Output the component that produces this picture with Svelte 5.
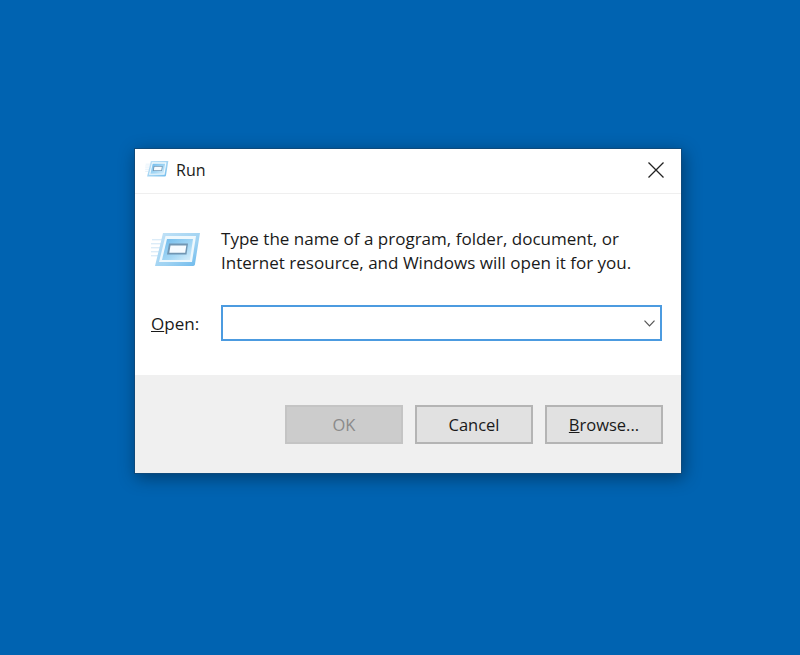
<script>
  const buttons = [
    { id: 'ok', key: '', after: 'OK', disabled: true },
    { id: 'cancel', key: '', after: 'Cancel', disabled: false },
    { id: 'browse', key: 'B', after: 'rowse...', disabled: false }
  ];
</script>

{#snippet runIcon(cls)}
  <svg class={cls} viewBox="0 0 50 36" aria-hidden="true">
    <defs>
      <linearGradient id={cls + '-outer'} x1="0" y1="0" x2="1" y2="1">
        <stop offset="0" stop-color="#c4e3f7" />
        <stop offset="0.6" stop-color="#9ed2f2" />
        <stop offset="1" stop-color="#6ab8ec" />
      </linearGradient>
      <linearGradient id={cls + '-inner'} x1="0" y1="0" x2="1" y2="1">
        <stop offset="0" stop-color="#6dbaec" />
        <stop offset="0.6" stop-color="#a6d8f5" />
        <stop offset="1" stop-color="#dcf0fb" />
      </linearGradient>
    </defs>
    <g fill="#dcecf8">
      <rect x="1" y="8" width="11" height="1.400" />
      <rect x="0" y="12" width="10" height="1.400" />
      <rect x="0" y="16" width="9" height="1.400" />
      <rect x="0" y="20" width="8" height="1.400" />
      <rect x="0" y="24" width="7" height="1.400" />
    </g>
    <path d="M12 2 H49 L44 33 Q44 35 41 35 H4 Z" fill={`url(#${cls}-outer)`} />
    <path d="M14.500 5 H45 L41 31 H8 Z" fill="#eef8fd" />
    <path d="M16 8 H42 L39 29 H11 Z" fill={`url(#${cls}-inner)`} />
    <path d="M18 12.500 H37 L35.500 23.500 H16 Z" fill="#7196b3" />
    <path d="M19.500 14.500 H35.300 L34.200 21.800 H18.300 Z" fill="#f6fbff" />
  </svg>
{/snippet}

<main class="desktop">
  <section class="dialog">
    <header class="titlebar">
      {@render runIcon('small-icon')}
      <span class="title">Run</span>
      <svg class="close" viewBox="0 0 16 16" aria-hidden="true">
        <path d="M0.500 0.500 L15.500 15.500 M15.500 0.500 L0.500 15.500" />
      </svg>
    </header>

    <div class="content">
      <div class="intro">
        {@render runIcon('big-icon')}
        <p>Type the name of a program, folder, document, or<br />Internet resource, and Windows will open it for you.</p>
      </div>
      <div class="open-row">
        <span class="label"><u>O</u>pen:</span>
        <div class="combo">
          <svg class="chevron" viewBox="0 0 11 7" aria-hidden="true">
            <path d="M0.500 0.700 L5.500 6 L10.500 0.700" />
          </svg>
        </div>
      </div>
    </div>

    <footer class="footer">
      {#each buttons as b (b.id)}
        <button class="btn" class:disabled={b.disabled} disabled={b.disabled}>{#if b.key}<u>{b.key}</u>{/if}{b.after}</button>
      {/each}
    </footer>
  </section>
</main>

<style>
  :global(body) {
    margin: 0;
    background: #0063b1;
  }
  .desktop {
    box-sizing: border-box;
    height: 655px;
    padding: 148px 0 0 134px;
    background: #0063b1;
    font-family: "Open Sans", "Noto Sans", sans-serif;
    color: #1a1a1a;
    overflow: hidden;
  }
  .dialog {
    box-sizing: border-box;
    width: 548px;
    height: 326px;
    background: #fff;
    border: 1px solid #0e4a7c;
    box-shadow: 2px 4px 16px rgba(0, 0, 0, 0.38);
    display: flex;
    flex-direction: column;
  }
  .titlebar {
    box-sizing: border-box;
    height: 45px;
    flex: none;
    display: flex;
    align-items: center;
    padding: 0 17px 2px 10px;
    border-bottom: 1px solid #efefef;
  }
  .small-icon {
    width: 24px;
    height: 17px;
    margin-top: -4px;
    filter: blur(0.3px);
  }
  .title {
    margin-left: 7px;
    font-size: 16px;
    color: #1a1a1a;
    flex: 1;
  }
  .close {
    width: 16px;
    height: 16px;
    fill: none;
    stroke: #222;
    stroke-width: 1.3;
  }
  .content {
    flex: 1;
    display: flex;
    flex-direction: column;
    padding: 33px 19px 0 16px;
  }
  .intro {
    display: flex;
    align-items: flex-start;
  }
  .big-icon {
    width: 50px;
    height: 36px;
    margin: 4px 20px 0 0;
    flex: none;
    filter: blur(0.5px);
  }
  p {
    margin: 0;
    font-size: 17.05px;
    line-height: 24px;
    white-space: nowrap;
    color: #1a1a1a;
  }
  .open-row {
    display: flex;
    align-items: center;
    margin-top: 30px;
  }
  .label {
    width: 70px;
    flex: none;
    font-size: 17.05px;
    color: #1a1a1a;
  }
  .combo {
    box-sizing: border-box;
    flex: 1;
    height: 36px;
    border: 2px solid #4c9be0;
    display: flex;
    align-items: center;
    justify-content: flex-end;
    padding-right: 5px;
  }
  .chevron {
    width: 11px;
    height: 7px;
    fill: none;
    stroke: #555;
    stroke-width: 1.2;
  }
  .footer {
    box-sizing: border-box;
    height: 98px;
    flex: none;
    background: #f0f0f0;
    display: flex;
    justify-content: flex-end;
    gap: 12px;
    padding: 30px 18px 0 0;
  }
  .btn {
    box-sizing: border-box;
    width: 118px;
    height: 39px;
    padding: 0 0 1px;
    background: #e1e1e1;
    border: 2px solid #b4b4b4;
    font: inherit;
    font-size: 16.5px;
    color: #1a1a1a;
  }
  .btn.disabled {
    background: #cccccc;
    border-color: #c4c4c4;
    color: #8a8a8a;
  }
</style>
